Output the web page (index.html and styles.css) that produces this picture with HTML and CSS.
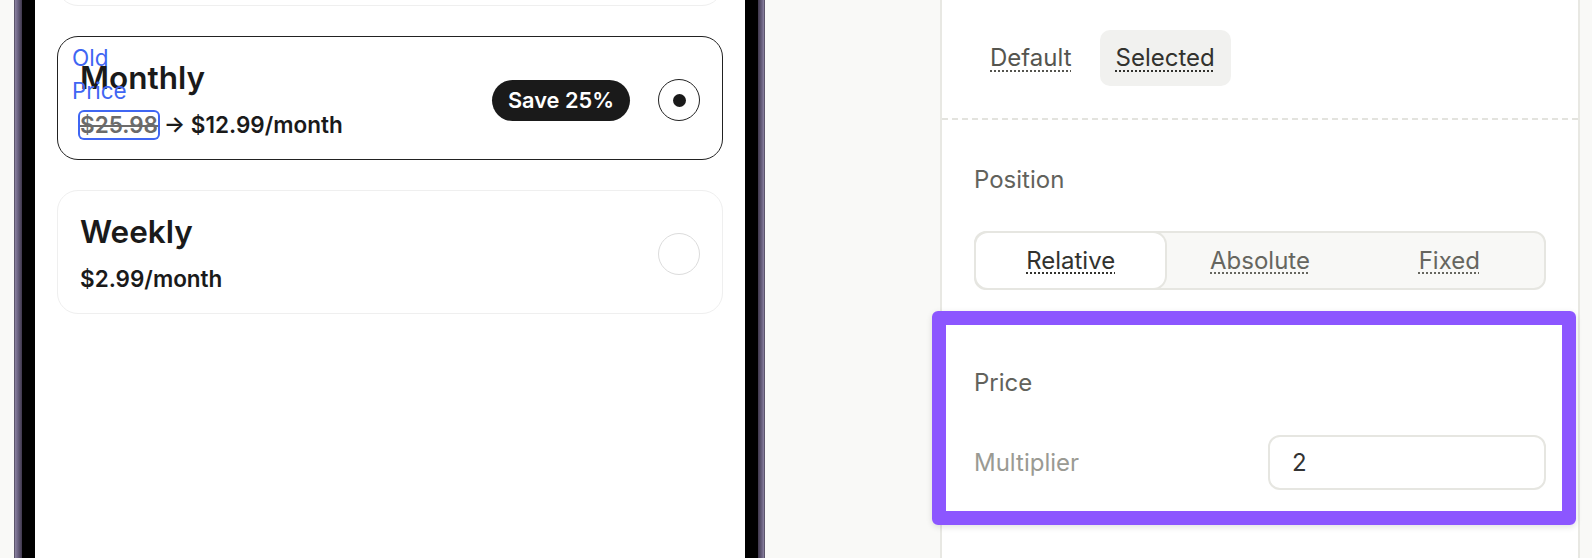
FILE: index.html
```html
<!DOCTYPE html>
<html lang="en">
<head>
  <meta charset="UTF-8" />
  <title>Paywall Editor</title>
  <link rel="stylesheet" href="styles.css">
</head>
<body>
  <div class="page">
    <div class="phone">
      <div class="bezel">
        <div class="screen">
          <div class="plan plan-top"></div>

          <div class="plan plan-selected">
            <div class="plan-info">
              <div class="plan-name">Monthly</div>
              <div class="plan-price">
                <span class="old-price">$25.98<span class="debug-label">Old Price</span></span> &rarr; $12.99/month
              </div>
            </div>
            <span class="badge">Save 25%</span>
            <span class="radio checked"></span>
          </div>

          <div class="plan">
            <div class="plan-info">
              <div class="plan-name">Weekly</div>
              <div class="plan-price">$2.99/month</div>
            </div>
            <span class="radio"></span>
          </div>
        </div>
      </div>
    </div>

    <aside class="panel">
      <div class="states">
        <button class="state">Default</button>
        <button class="state active">Selected</button>
      </div>
      <div class="divider"></div>

      <div class="section">
        <div class="section-title">Position</div>
        <div class="segmented">
          <button class="seg active">Relative</button>
          <button class="seg">Absolute</button>
          <button class="seg">Fixed</button>
        </div>
      </div>

      <div class="section highlight">
        <div class="section-title">Price</div>
        <div class="field">
          <label for="multiplier">Multiplier</label>
          <input type="text" id="multiplier" value="2" />
        </div>
      </div>
    </aside>
  </div>
</body>
</html>
```

FILE: styles.css
```css
* {
  box-sizing: border-box;
}
body {
  margin: 0;
  height: 558px;
  overflow: hidden;
  background: #f9f9f7;
  font-family: Inter, "Noto Sans", sans-serif;
  color: #1a1a1a;
}
button {
  font: inherit;
  border: none;
  background: none;
  padding: 0;
  cursor: pointer;
}
.page {
  display: flex;
  justify-content: space-between;
  height: 558px;
  padding: 0 12px 0 14px;
}

/* phone preview */
.phone {
  width: 751px;
  height: 100%;
  padding: 0 7px 0 8px;
  background:
    linear-gradient(90deg, #2e2937 0, #8b82a0 1px, #6a6180 4px, #3f384c 8px, transparent 8px),
    linear-gradient(270deg, #2e2937 0, #8b82a0 1px, #6a6180 3px, #3f384c 7px, transparent 7px);
}
.bezel {
  height: 100%;
  padding: 0 13px;
  background: #000;
}
.screen {
  height: 100%;
  background: #fff;
  padding: 0 22px;
  display: flex;
  flex-direction: column;
  gap: 30px;
}
.plan {
  display: flex;
  align-items: center;
  gap: 28px;
  height: 124px;
  padding: 22px 22px 18px;
  border: 1px solid #efefef;
  border-radius: 21px;
  flex-shrink: 0;
}
.plan-top {
  margin-top: -118px;
}
.plan-selected {
  border-color: #222;
}
.plan-info {
  flex: 1;
  display: flex;
  flex-direction: column;
  gap: 12px;
}
.plan-name {
  font-size: 31.5px;
  line-height: 37px;
  font-weight: 600;
}
.plan-price {
  font-size: 22.5px;
  line-height: 33px;
  font-weight: 600;
}
.old-price {
  position: relative;
  display: inline-block;
  line-height: 26px;
  border-radius: 4px;
  box-shadow: 0 0 0 2px #3f66f3;
  color: #6b6b6b;
  text-decoration: line-through;
}
.debug-label {
  position: absolute;
  left: -8px;
  bottom: calc(100% + 5px);
  width: min-content;
  font-size: 22.5px;
  line-height: 33px;
  font-weight: 400;
  color: #3f66f3;
  display: inline-block;
}
.badge {
  height: 41px;
  line-height: 41px;
  padding: 0 16px;
  border-radius: 999px;
  background: #1a1a1a;
  color: #fff;
  font-size: 21.75px;
  font-weight: 600;
}
.radio {
  width: 42px;
  height: 42px;
  border-radius: 50%;
  border: 1.5px solid #dcdcdc;
  display: flex;
  align-items: center;
  justify-content: center;
}
.radio.checked {
  border-color: #222;
}
.radio.checked::after {
  content: "";
  width: 13px;
  height: 13px;
  border-radius: 50%;
  background: #1a1a1a;
}

/* inspector panel */
.panel {
  width: 640px;
  height: 100%;
  background: #fff;
  border-left: 2px solid #e8e8e3;
  border-right: 2px solid #e8e8e3;
  font-size: 24px;
  line-height: 36px;
}
.states {
  display: flex;
  gap: 12px;
  padding: 30px 32px 32px;
}
.state {
  padding: 10px 16px;
  border-radius: 10px;
  color: #55554f;
  text-decoration: underline dotted;
  text-decoration-thickness: 2px;
  text-underline-offset: 4px;
}
.state.active {
  background: #f1f1ef;
  color: #32322e;
}
.divider {
  height: 2px;
  background: repeating-linear-gradient(90deg, #e3e3de 0 6px, transparent 6px 10px);
}
.section {
  padding: 42px 32px 0;
}
.section-title {
  color: #62625c;
  margin-bottom: 33px;
}
.segmented {
  display: grid;
  grid-template-columns: repeat(3, 1fr);
  border: 2px solid #e6e6e1;
  border-radius: 12px;
  background: #f8f8f6;
}
.seg {
  height: 55px;
  color: #66665f;
  text-decoration: underline dotted;
  text-decoration-thickness: 2px;
  text-underline-offset: 4px;
}
.seg.active {
  background: #fff;
  color: #32322e;
  border-radius: 12px;
  box-shadow: 0 0 0 2px #e6e6e1;
}
.highlight {
  margin: 21px 2px 0 -10px;
  padding: 40px 16px 21px 28px;
  border: 14px solid #8c56ff;
  border-radius: 6px;
  box-shadow: 0 2px 6px rgba(0, 0, 0, 0.12);
}
.highlight .section-title {
  margin-bottom: 34px;
}
.field {
  display: flex;
  align-items: center;
  justify-content: space-between;
}
.field label {
  color: #9a9a93;
}
.field input {
  width: 278px;
  height: 55px;
  padding: 0 22px;
  border: 2px solid #e6e6e1;
  border-radius: 12px;
  font: inherit;
  color: #333;
  outline: none;
}
```
